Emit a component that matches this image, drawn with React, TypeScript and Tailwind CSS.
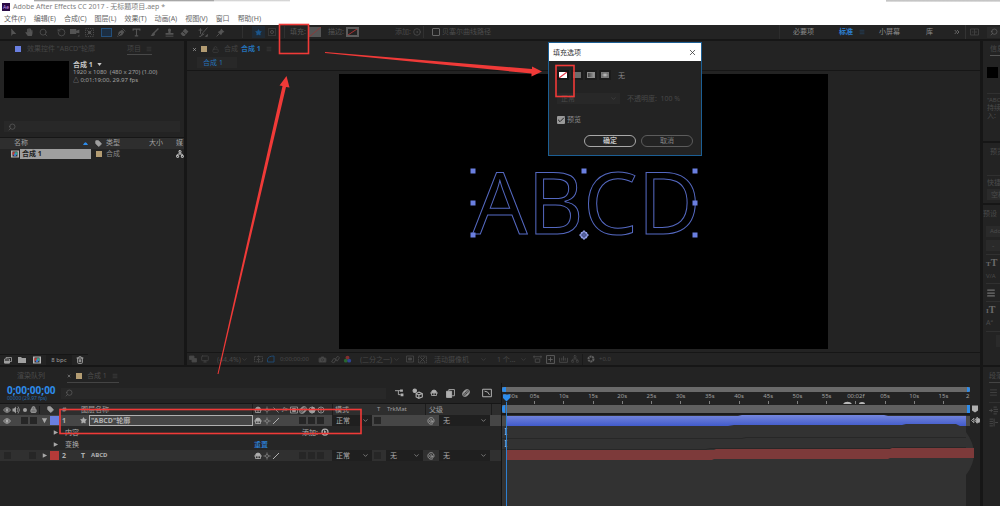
import React from "react";
import {
  Camera,
  Check,
  ChevronDown,
  ChevronsRight,
  CircleDot,
  Lock,
  LockOpen,
  Menu,
  Monitor,
  Network,
  RotateCcw,
  Search,
  Star,
  Tag,
  Trash2,
  X,
} from "lucide-react";
import { FaHandPaper } from "react-icons/fa";

const menus = [
  "文件(F)",
  "编辑(E)",
  "合成(C)",
  "图层(L)",
  "效果(T)",
  "动画(A)",
  "视图(V)",
  "窗口",
  "帮助(H)",
];

const ticks = [
  "05s",
  "10s",
  "15s",
  "20s",
  "25s",
  "30s",
  "35s",
  "40s",
  "45s",
  "50s",
  "55s",
  "00:02f",
  "05s",
  "10s",
  "15s",
];

const layerGrid =
  "grid grid-cols-[40px_20px_19px_174px_79px_42px_12px_39px_67px_10px] items-center";

interface GlyphProps {
  children: React.ReactNode;
  className?: string;
}

// 16 unit drawing box shared by all the hand made icons
const Glyph: React.FC<GlyphProps> = ({ children, className = "size-[9px]" }) => (
  <svg
    viewBox="0 0 16 16"
    className={`shrink-0 ${className}`}
    fill="none"
    stroke="currentColor"
    strokeWidth="1.6"
    aria-hidden="true"
  >
    {children}
  </svg>
);

interface ToolProps {
  label: string;
  children: React.ReactNode;
  className?: string;
}

const Tool: React.FC<ToolProps> = ({ label, children, className = "w-[15px]" }) => (
  <button
    type="button"
    aria-label={label}
    className={`h-3 shrink-0 flex items-center justify-center ${className}`}
  >
    {children}
  </button>
);

interface DropProps {
  label: string;
  value: string;
  className: string;
}

const Drop: React.FC<DropProps> = ({ label, value, className }) => (
  <span className={`relative shrink-0 h-[11px] flex items-center ${className}`}>
    <select
      aria-label={label}
      className="appearance-none w-full h-full pl-1 text-[7px] leading-[11px] outline-none"
    >
      <option>{value}</option>
    </select>
    <ChevronDown className="absolute right-[3px] size-[7px] pointer-events-none" />
  </span>
);

const Shy = () => (
  <Glyph className="size-[8px]">
    <path d="M3 7a5 5 0 0 1 10 0Z" fill="currentColor" />
    <path d="M0 8h16M8 8v6M3 8v5M13 8v5M3 13h10" />
  </Glyph>
);

const Sun = () => (
  <Glyph className="size-[8px] opacity-70">
    <circle cx="8" cy="8" r="3" />
    <path d="M8 1v3M8 12v3M1 8h3M12 8h3" />
  </Glyph>
);

const Slash = () => (
  <Glyph className="size-[8px]">
    <path d="M2 14 14 2" strokeWidth="2" />
  </Glyph>
);

const Blur = () => (
  <Glyph className="size-[8px]">
    <circle cx="10" cy="6" r="5" />
    <circle cx="8" cy="8" r="5" />
    <circle cx="6" cy="10" r="5" />
  </Glyph>
);

const Whip = () => (
  <Glyph className="size-[8px]">
    <path d="M10.500 8a2.500 2.500 0 1 1-1-2c1.500 1 0 5 2.500 5s3-7-1-9-10 1-9 7 8 6 10 4" />
  </Glyph>
);

const Eye = () => (
  <Glyph className="size-[8px]">
    <path d="M1 8q7-9 14 0-7 9-14 0Z" strokeWidth="2" />
    <circle cx="8" cy="8" r="2.500" fill="currentColor" />
  </Glyph>
);

const CompIcon = () => (
  <Glyph className="w-[10px] h-[8px]">
    <rect x="0" y="1" width="16" height="14" fill="#b5b5b5" stroke="none" />
    <rect x="3" y="3" width="10" height="10" fill="#333" stroke="none" />
    <circle cx="6" cy="7" r="3" fill="#c33" stroke="none" />
    <circle cx="10" cy="7" r="3" fill="#3a9" stroke="none" />
    <circle cx="8" cy="10" r="2.500" fill="#47c" stroke="none" />
  </Glyph>
);

const Triangle: React.FC<{ open?: boolean; label: string }> = ({ open, label }) => (
  <button type="button" aria-label={label} className="size-[8px] shrink-0 text-[#a8a8a8]">
    <Glyph className="size-[7px]">
      <path
        d={open ? "M2 3h12L8 14Z" : "M4 3v10l10-5Z"}
        fill="currentColor"
        stroke="none"
      />
    </Glyph>
  </button>
);

const Box = () => <span className="size-[7px] shrink-0 bg-[#262626]" />;

const Header = () => (
  <header className="relative bg-white text-[#666]">
    <div className="absolute top-0 left-[34px] w-[180px] h-[2px] bg-linear-to-b from-[#8b8b8b] to-white" />
    <div className="absolute top-0 left-[214px] w-[76px] h-[2px] bg-linear-to-b from-[#c8c8c8] to-white" />
    <div className="absolute top-0 right-0 w-[114px] h-[2px] bg-linear-to-b from-[#bbb] to-[#e4e4e4]" />
    <div className="flex items-center gap-[3px] h-[13px] px-[2px]">
      <span className="w-[8px] h-[8px] bg-[#2a0a45] text-[#c79bf0] text-[5px] leading-[8px] text-center">
        Ae
      </span>
      <h1 className="text-[7px] leading-[12px] text-[#808080]">
        Adobe After Effects CC 2017 - 无标题项目.aep *
      </h1>
    </div>
    <nav>
      <ul className="flex gap-2 h-[12px] px-1 text-[7px] leading-[11px]">
        {menus.map((item) => (
          <li key={item}>
            <button type="button" className="block">
              {item}
            </button>
          </li>
        ))}
      </ul>
    </nav>
  </header>
);

const Toolbar = () => (
  <div className="flex items-center h-4 border-b-2 border-[#161616] text-[#545454] text-[7px] whitespace-nowrap overflow-hidden">
    <div className="flex gap-[3px] pl-[6px]">
      <div className="flex">
        <Tool label="选取">
          <Glyph>
            <path d="M4 1v13l3-3.500h6Z" fill="currentColor" stroke="none" />
          </Glyph>
        </Tool>
        <Tool label="手形">
          <FaHandPaper className="size-[8px]" />
        </Tool>
        <Tool label="缩放">
          <Search className="size-[9px]" />
        </Tool>
      </div>
      <div className="flex">
        <Tool label="旋转" className="w-[14px]">
          <RotateCcw className="size-[9px]" />
        </Tool>
        <Tool label="摄像机" className="w-[14px]">
          <Glyph className="size-[10px]">
            <path d="M0 3h10v3l5-2v6l-5-1v2H0Z" fill="currentColor" stroke="none" />
            <path d="M12 15l3-3v3Z" fill="currentColor" stroke="none" />
          </Glyph>
        </Tool>
        <Tool label="锚点" className="w-[14px]">
          <Glyph>
            <rect x="1" y="1" width="14" height="14" strokeDasharray="2 2" />
            <path d="M4 4l8 8M12 4l-8 8" />
            <circle cx="8" cy="8" r="2" fill="currentColor" />
          </Glyph>
        </Tool>
      </div>
      <div className="flex">
        <Tool label="矩形">
          <span className="w-[11px] h-[9px] bg-[#1c2e42] border border-[#24507c]" />
        </Tool>
        <Tool label="钢笔">
          <Glyph>
            <path d="M1 15 3 7l6-4 4 4-4 6Z" fill="currentColor" stroke="none" />
            <path d="m10 1 5 5M1 15l6-6" />
            <path d="M2 14l5-5" stroke="#232323" />
          </Glyph>
        </Tool>
        <Tool label="文字">
          <Glyph>
            <path d="M2 5V2h12v3M8 2v12M5 14h6" strokeWidth="2" />
          </Glyph>
        </Tool>
      </div>
      <div className="flex">
        <Tool label="画笔">
          <Glyph>
            <path d="M15 1 7 9" strokeWidth="2.500" />
            <path d="M7 8c-4 0-3 5-6 6 4 1 8 0 8-4Z" fill="currentColor" stroke="none" />
          </Glyph>
        </Tool>
        <Tool label="仿制图章">
          <Glyph>
            <path d="M8 1a3 3 0 0 1 2 5v3h5v3H1V9h5V6a3 3 0 0 1 2-5Z" fill="currentColor" stroke="none" />
            <path d="M1 14.500h14" />
          </Glyph>
        </Tool>
        <Tool label="橡皮擦">
          <Glyph>
            <path d="m9 1 6 5-7 8H5l-4-4Z" fill="currentColor" stroke="none" />
            <path d="m4 6 6 5" stroke="#232323" />
          </Glyph>
        </Tool>
      </div>
      <Tool label="Roto 笔刷">
        <Glyph className="size-[10px]">
          <path d="M15 1 8 9l-3 5 5-3M4 2v9M1 5h6M2 15h3M12 15l3-3v3Z" />
        </Glyph>
      </Tool>
      <Tool label="操控点">
        <Glyph>
          <path d="m9 1 6 6-3 1-2 3-1 2-6-6 2-1 3-2Z" fill="currentColor" stroke="none" />
          <path d="m6 10-5 5" />
        </Glyph>
      </Tool>
    </div>
    <span className="ml-[14px] w-px h-3 bg-[#303030]" />
    <Tool label="形状" className="ml-[9px] w-[13px] bg-[#202a34]">
      <Star className="size-[7px] fill-[#1c568c] text-[#1c568c]" />
    </Tool>
    <Tool label="蒙版" className="w-[13px]">
      <Glyph className="size-[8px]">
        <rect x="1" y="1" width="14" height="14" strokeDasharray="2 2" />
        <circle cx="8" cy="8" r="3" />
      </Glyph>
    </Tool>
    <span className="ml-[6px] w-px h-3 bg-[#303030]" />
    <span className="ml-[5px] w-[19px]">填充:</span>
    <button type="button" aria-label="填充颜色" className="w-[12px] h-[10px] bg-[#555]">
      <svg viewBox="0 0 12 10" className="size-full stroke-[#8a3a3a]">
        <path d="M0 10 12 0" />
      </svg>
    </button>
    <span className="ml-[7px] w-[18px]">描边:</span>
    <button
      type="button"
      aria-label="描边颜色"
      className="w-[13px] h-[10px] border-2 border-[#5c5c5c]"
    >
      <svg viewBox="0 0 9 6" className="size-full stroke-[#a33]">
        <path d="M0 6 9 0" />
      </svg>
    </button>
    <span className="ml-[36px] w-[18px] text-[#484848]">添加:</span>
    <CircleDot className="size-[8px]" />
    <span className="ml-[2px] w-px h-3 bg-[#303030]" />
    <label className="ml-2 flex items-center gap-[2px] text-[#4c4c4c]">
      <input
        type="checkbox"
        className="appearance-none size-[8px] border border-[#666] rounded-[1px]"
      />
      贝塞尔曲线路径
    </label>
    <div className="ml-auto flex items-center h-full text-[#8c8c8c]">
      <span className="w-px h-full bg-[#2c2c2c]" />
      <button type="button" className="ml-[13px]">必要项</button>
      <button type="button" className="ml-[25px] font-bold text-[#2d7fd0]">标准</button>
      <Menu className="ml-[6px] size-[6px] text-[#24507c]" />
      <button type="button" className="ml-[14px]">小屏幕</button>
      <button type="button" className="ml-[26px]">库</button>
      <ChevronsRight className="ml-[20px] size-[8px]" />
      <span className="ml-[4px] w-px h-full bg-[#333]" />
      <Glyph className="ml-[3px] w-[11px] h-[8px] text-[#444]">
        <path d="M0 2h16v12H0ZM8 2v12M3 8h3M11 6v4" />
      </Glyph>
      <span className="ml-[7px] w-[13px] h-[11px] pl-[3px] flex items-center bg-[#2a2a2a]">
        <Search className="size-[8px] -scale-x-100 text-[#666]" />
      </span>
    </div>
  </div>
);

const ProjectPanel = () => (
  <section className="w-[184px] shrink-0 flex flex-col bg-[#232323] text-[7px] leading-[10px] text-[#a0a0a0] whitespace-nowrap">
    <div className="flex h-4 pl-[15px] text-[#454545]">
      <span className="mt-[5px] size-[6px] bg-[#6a7fe0]" />
      <span className="ml-[6px] mt-[3px] w-[100px]">效果控件 "ABCD"轮廓</span>
      <span className="h-[14px] pt-[3px] w-[25px] flex justify-between border-b border-[#484848]">
        项目
        <Menu className="mt-[2px] size-[6px]" />
      </span>
    </div>
    <div className="flex gap-1 h-[64px] pt-1 pl-1">
      <div className="w-[65px] h-[37px] bg-black" />
      <div className="text-[6px] leading-[8px]">
        <h2 className="flex items-center text-[7px] leading-[7px] font-bold text-[#c8c8c8]">
          合成 1
          <Glyph className="ml-1 size-[5px]">
            <path d="M1 3h14L8 13Z" fill="currentColor" stroke="none" />
          </Glyph>
        </h2>
        <p>1920 x 1080&nbsp; (480 x 270) (1.00)</p>
        <p>△ 0;01;19;00, 29.97 fps</p>
      </div>
    </div>
    <label className="flex items-center mx-1 h-[11px] pl-1 bg-[#282828]">
      <Search className="size-[8px] -scale-x-100 text-[#606060]" />
      <input aria-label="搜索项目" className="min-w-0 flex-1 outline-none" />
    </label>
    <table className="mt-[5px] w-full table-fixed border-t border-[#161616]">
      <thead>
        <tr className="h-[11px] bg-[#2e2e2e]">
          <th className="w-[91px] pl-[14px] font-normal text-left">
            <span className="flex items-center justify-between">
              名称
              <Glyph className="mr-[2px] w-[7px] h-[5px] text-[#2d8ceb]">
                <path d="M0 13q8-18 16 0Z" fill="currentColor" stroke="none" />
              </Glyph>
            </span>
          </th>
          <th className="w-[15px]" aria-label="标签">
            <Tag className="mx-auto size-[7px] fill-[#a0a0a0]" />
          </th>
          <th className="w-[39px] font-normal text-left">类型</th>
          <th className="w-[31px] pl-1 font-normal text-left">大小</th>
          <th className="font-normal text-left">媒</th>
        </tr>
      </thead>
      <tbody>
        <tr className="h-[11px]">
          <td className="pl-[10px]">
            <span className="flex items-center">
              <CompIcon />
              <span className="flex-1 h-[10px] pl-[2px] bg-[#9f9f9f] font-bold text-[#1c1c1c]">
                合成 1
              </span>
            </span>
          </td>
          <td>
            <span className="block mx-auto size-[6px] bg-[#b39c72]" />
          </td>
          <td className="text-[#888]">合成</td>
          <td />
          <td>
            <Network className="size-[8px] text-[#c0c0c0] stroke-3" />
          </td>
        </tr>
      </tbody>
    </table>
    <div className="mt-auto flex items-center h-[11px] mr-[96px] pl-[3px] border-t border-[#161616]">
      <Glyph className="w-[10px] h-[8px]">
        <path d="M1 6h10v8H1ZM4 6V3h11v8h-4" />
        <path d="M1 10h10v4H1Z" fill="currentColor" />
      </Glyph>
      <Glyph className="ml-[5px] size-[8px]">
        <path d="M0 2h6l2 2h8v10H0Z" fill="currentColor" stroke="none" />
      </Glyph>
      <span className="ml-[6px] flex">
        <CompIcon />
      </span>
      <span className="ml-[4px] w-[26px] text-center text-[6px] bg-[#1d1d1d]">8 bpc</span>
      <Trash2 className="ml-[4px] size-[8px] stroke-3" />
    </div>
  </section>
);

const Handle: React.FC<{ className: string }> = ({ className }) => (
  <span className={`absolute size-[5px] -translate-1/2 bg-[#6a7fe0] ${className}`} />
);

const Viewer = () => (
  <section className="min-w-0 flex-1 flex flex-col bg-[#232323] text-[7px] leading-[10px] whitespace-nowrap">
    <div className="flex items-center h-4 pl-[5px] text-[#444]">
      <X className="size-[5px] stroke-3 text-[#aaa]" />
      <span className="ml-[4px] size-[6px] bg-[#b39c72]" />
      <LockOpen className="ml-[5px] size-[7px]" />
      <span className="ml-[5px]">合成</span>
      <span className="ml-[3px] font-bold text-[#2572b8]">合成 1</span>
      <Menu className="ml-[5px] size-[6px]" />
    </div>
    <div className="h-[14px] pl-[10px] border-b border-[#161616]">
      <button type="button" className="block w-10 h-[11px] pr-2 bg-[#282828] text-[#2572b8]">
        合成 1
      </button>
    </div>
    <div className="px-38 pt-[3px] pb-[3px]">
      <div className="relative h-[275px] bg-black">
        {/* selected outline layer */}
        <div className="absolute left-1/2 top-[97px] w-[222px] h-[64px] -translate-x-1/2">
          <p className="text-[86px] leading-[60px] font-['Noto_Sans'] text-transparent [-webkit-text-stroke:1px_#5468c0]">
            ABCD
          </p>
          <Handle className="left-0 top-0" />
          <Handle className="left-1/2 top-0" />
          <Handle className="left-full top-0" />
          <Handle className="left-0 top-1/2" />
          <Handle className="left-full top-1/2" />
          <Handle className="left-0 top-full" />
          <Handle className="left-full top-full" />
          <svg
            viewBox="0 0 16 16"
            className="absolute left-1/2 top-full size-[10px] -translate-1/2"
          >
            <path d="m8 0 3 3h2v2l3 3-3 3v2h-2l-3 3-3-3H3v-2L0 8l3-3V3h2Z" fill="#8f9be0" />
            <path d="M8 3v10M3 8h10" stroke="#2a3468" />
            <circle cx="8" cy="8" r="3" fill="none" stroke="#2a3468" />
          </svg>
        </div>
      </div>
    </div>
    <div className="mt-auto flex items-center h-[13px] pl-[2px] border-t border-[#161616] text-[#484848]">
      <Tool label="始终预览" className="w-2">
        <Glyph className="size-[8px]">
          <path d="M1 2h9v7H1ZM6 7h9v7H6Z" fill="currentColor" />
        </Glyph>
      </Tool>
      <Tool label="主查看器" className="ml-[4px] w-2">
        <Monitor className="size-[8px]" />
      </Tool>
      <Drop label="放大率" value="(44.4%)" className="ml-[4px] w-[38px]" />
      <Tool label="网格" className="ml-[2px] w-[10px]">
        <Glyph>
          <path d="M1 3h14v9H1ZM8 1v13M5 8h6" strokeDasharray="3 1" />
        </Glyph>
      </Tool>
      <Tool label="蒙版可见性" className="ml-[2px] w-[11px] text-[#1e4870]">
        <Glyph className="size-[8px]">
          <path d="M1 14V9q1-7 13-7v12Z" strokeWidth="2" />
        </Glyph>
      </Tool>
      <span className="mx-[4px] w-[34px] text-[6px]">0;00;00;00</span>
      <Camera className="size-[9px] shrink-0 fill-[#484848] stroke-[#333]" />
      <Glyph className="ml-[4px] size-[9px]">
        <path d="m1 12 4-6 4 2-4 6ZM8 7l4-5 3 3-4 6Z" />
      </Glyph>
      <Glyph className="ml-[3px] size-[9px]">
        <circle cx="8" cy="5" r="3.500" fill="#822f2f" stroke="none" />
        <circle cx="5" cy="10" r="3.500" fill="#28662f" stroke="none" />
        <circle cx="11" cy="10" r="3.500" fill="#2f4292" stroke="none" />
      </Glyph>
      <Drop label="分辨率" value="(二分之一)" className="ml-[4px] w-[47px]" />
      <Glyph className="ml-[3px] size-[8px]">
        <path d="M1 2h14v12H1Z" />
        <path d="M5 6h6v4H5Z" fill="currentColor" />
      </Glyph>
      <Glyph className="ml-[4px] size-[9px]">
        <path d="M1 2h14v12H1Z" strokeDasharray="3 1" />
        <path d="M4 12 12 4M4 4l8 8" />
      </Glyph>
      <Drop label="视图" value="活动摄像机" className="ml-[3px] w-[60px]" />
      <Drop label="视图布局" value="1 个..." className="ml-[3px] w-[37px]" />
      <Glyph className="ml-[3px] size-[9px]">
        <path d="M0 3h16M4 7h8v6H4ZM2 1v5M14 1v5" />
      </Glyph>
      <Glyph className="ml-[4px] size-[9px] text-[#606060]">
        <path d="M1 1h14v14H1ZM8 4v8M4 8h8" />
      </Glyph>
      <Glyph className="ml-[4px] size-[9px]">
        <path d="M1 5v8h14V5M5 5v5M8 2v8M11 5v5" />
      </Glyph>
      <Network className="ml-[3px] size-[8px] shrink-0" />
      <span className="mx-[3px] w-px h-[11px] bg-[#1a1a1a]" />
      <Glyph className="ml-[1px] size-[8px] text-[#606060]">
        <circle cx="8" cy="8" r="5" strokeWidth="4" strokeDasharray="4 1" />
      </Glyph>
      <span className="ml-[4px] text-[6px]">+0.0</span>
    </div>
  </section>
);

const LayerHead = () => (
  <div className={`${layerGrid} h-[11px] bg-[#2e2e2e] text-[7px] leading-[11px] text-[#a0a0a0]`}>
    <span className="flex items-center gap-px pl-[3px] border-r border-[#1c1c1c]">
      <Eye />
      <Glyph className="size-[8px]">
        <path d="M1 5h3l4-4v14l-4-4H1Z" fill="currentColor" stroke="none" />
        <path d="M10 4q4 4 0 8M12 1q6 7 0 14" />
      </Glyph>
      <Glyph className="size-[8px]">
        <circle cx="8" cy="8" r="4" fill="currentColor" stroke="none" />
      </Glyph>
      <Lock className="size-[7px] stroke-3 fill-[#777]" />
    </span>
    <span className="flex justify-center">
      <Tag className="size-[7px] fill-[#a0a0a0]" />
    </span>
    <span className="pl-[2px]">#</span>
    <span className="pl-[2px] border-r border-[#1c1c1c]">图层名称</span>
    <span className="flex items-center gap-px pl-px">
      <Shy />
      <Sun />
      <Glyph className="size-[8px]">
        <path d="m3 3 10 10" />
      </Glyph>
      <i className="w-[8px] text-[6px] text-center">fx</i>
      <Glyph className="size-[8px]">
        <path d="M1 2h14v12H1Z" />
        <path d="M5 5h6v6H5Z" fill="currentColor" />
      </Glyph>
      <Blur />
      <Glyph className="size-[8px]">
        <circle cx="8" cy="8" r="6" />
        <path d="M8 2a6 6 0 0 1-6 6q2 6 6 6a6 6 0 0 0 0-12" fill="currentColor" />
      </Glyph>
      <Glyph className="size-[8px]">
        <circle cx="8" cy="8" r="6" />
        <path d="M8 4v8" />
      </Glyph>
    </span>
    <span className="pl-[2px] border-l border-[#1c1c1c]">模式</span>
    <span className="pl-[3px] text-[6px]">T</span>
    <span className="pl-px text-[6px]">TrkMat</span>
    <span className="pl-[3px] border-x border-[#1c1c1c]">父级</span>
    <span />
  </div>
);

const Switches = () => (
  <span className="flex items-center gap-px pl-px">
    <Shy />
    <Sun />
    <Slash />
    <span className="flex gap-[2px] ml-[18px]">
      <Box />
      <Box />
      <Box />
    </span>
  </span>
);

const LayerOutline = () => (
  <div className="w-[502px] shrink-0 border-r border-[#141414] text-[7px] leading-[11px] text-[#b0b0b0] whitespace-nowrap">
    <div className="flex items-center h-[21px] pl-[7px] border-b border-[#161616]">
      <div className="w-[54px]">
        <p className="text-[10px] leading-[10px] font-bold text-[#2d8ceb]">0;00;00;00</p>
        <p className="text-[5px] leading-[7px] text-[#2666a4]">00000 (29.97 fps)</p>
      </div>
      <label className="flex items-center w-[325px] h-[11px] pl-1 bg-[#282828]">
        <Search className="size-[8px] -scale-x-100 text-[#606060]" />
        <input aria-label="搜索图层" className="min-w-0 flex-1 outline-none" />
      </label>
      <div className="flex-1 flex items-center justify-between pl-[9px] pr-[9px]">
        <Glyph>
          <path d="M0 3h9M6 3v7h4" />
          <path d="M9 1h5v4H9ZM10 8h5v5h-5Z" fill="currentColor" stroke="none" />
        </Glyph>
        <Glyph className="size-[11px]">
          <path d="m10 6 5 2v5l-5 2-4-2V8ZM6 8l4 2 5-2M10 10v5" />
          <circle cx="4" cy="4" r="2.500" fill="currentColor" />
        </Glyph>
        <Shy />
        <Glyph>
          <path d="M1 4h9v11H1Z" fill="currentColor" />
          <path d="M5 4V1h10v11h-4" />
        </Glyph>
        <Blur />
        <Glyph className="ml-[4px] size-[10px]">
          <path d="M1 2h14v12H1ZM4 5q6 0 8 6" />
        </Glyph>
      </div>
    </div>
    <LayerHead />
    <div className={`${layerGrid} h-[11px] bg-[#464646]`}>
      <span className="flex items-center pl-[3px]">
        <Eye />
        <span className="flex gap-[2px] ml-[10px]">
          <Box />
          <Box />
        </span>
      </span>
      <span className="flex items-center gap-px pl-px">
        <Triangle open label="折叠图层 1" />
        <span className="w-[9px] h-[9px] bg-[#6a7fe0]" />
      </span>
      <span className="pl-[2px] font-bold">1</span>
      <span className="flex items-center">
        <Star className="ml-px mr-[2px] size-[7px] fill-[#b0b0b0]" />
        <input
          aria-label="图层名称"
          defaultValue={'"ABCD"轮廓'}
          className="min-w-0 flex-1 h-[11px] pl-px border border-[#b0b0b0] font-bold outline-none"
        />
      </span>
      <Switches />
      <Drop label="图层 1 模式" value="正常" className="w-[40px] bg-[#1f1f1f]" />
      <Box />
      <span />
      <span className="flex items-center gap-[4px] pl-[2px]">
        <Whip />
        <Drop label="图层 1 父级" value="无" className="w-[51px] bg-[#1f1f1f]" />
      </span>
      <span />
    </div>
    <div className="flex items-center h-3 pl-[52px] bg-[#262626]">
      <Triangle label="展开内容" />
      <span className="ml-[5px] w-[237px]">内容</span>
      <span>添加:</span>
      <Glyph className="ml-[3px] size-[8px]">
        <circle cx="8" cy="8" r="6" strokeWidth="2.500" />
        <path d="M6 4v8l5-4Z" fill="currentColor" stroke="none" />
      </Glyph>
    </div>
    <div className="flex items-center h-3 pl-[52px] bg-[#262626]">
      <Triangle label="展开变换" />
      <span className="ml-[5px] w-[189px]">变换</span>
      <button type="button" className="text-[#2d8ceb]">重置</button>
    </div>
    <div className={`${layerGrid} h-[11px] bg-[#303030]`}>
      <span className="flex items-center gap-[18px] pl-[4px]">
        <Box />
        <Box />
      </span>
      <span className="flex items-center gap-px pl-px">
        <Triangle label="展开图层 2" />
        <span className="w-[9px] h-[9px] bg-[#b53a38]" />
      </span>
      <span className="pl-[2px] font-bold">2</span>
      <span className="flex items-center gap-[6px] pl-[2px] font-bold">
        <span>T</span>
        <span className="text-[6px]">ABCD</span>
      </span>
      <Switches />
      <Drop label="图层 2 模式" value="正常" className="w-[40px] bg-[#1f1f1f]" />
      <Box />
      <Drop label="图层 2 轨道遮罩" value="无" className="w-[37px] bg-[#1f1f1f]" />
      <span className="flex items-center gap-[4px] pl-[2px]">
        <Whip />
        <Drop label="图层 2 父级" value="无" className="w-[51px] bg-[#1f1f1f]" />
      </span>
      <span />
    </div>
  </div>
);

const Tracks = () => (
  <div className="relative min-w-0 flex-1 flex flex-col">
    <div className="mt-[4px] mr-[10px] flex justify-between h-[5px] bg-[#6a6a6a]">
      <span className="w-[4px] rounded-l-full bg-[#2d8ceb]" />
      <span className="w-[3px] rounded-r-full bg-[#2d8ceb]" />
    </div>
    <div className="flex h-[12px] text-[6px] leading-[9px] text-[#a0a0a0] whitespace-nowrap">
      <span className="w-[18px] pl-px">0:00s</span>
      {ticks.map((tick, index) => (
        <span key={index} className="min-w-0 flex-1 flex flex-col items-center">
          {tick}
          <span className="w-px h-[3px] bg-[#808080]" />
        </span>
      ))}
      <span className="w-[22px] pl-[8px]">2</span>
    </div>
    <div className="flex items-center h-[9px]">
      <div className="flex-1 flex justify-between h-[8px] bg-[#606060]">
        <span className="w-[3px] rounded-l-full bg-[#2d8ceb]" />
        <span className="w-[3px] bg-[#2d8ceb]" />
      </div>
      <Glyph className="mx-px size-[8px] text-[#b0b0b0]">
        <path d="M2 1h12v10l-6 4-6-4Z" fill="currentColor" stroke="none" />
      </Glyph>
    </div>
    <svg
      viewBox="0 0 478 93"
      preserveAspectRatio="none"
      className="w-full min-h-[93px] flex-1"
      role="img"
      aria-label="图层持续时间"
    >
      <defs>
        <linearGradient id="bar" x2="0" y2="1">
          <stop offset="0" stopColor="#7486dc" />
          <stop offset="1" stopColor="#425bcb" />
        </linearGradient>
      </defs>
      <path d="M0 2h464v17q16 22 0 43v31H0Z" fill="#323232" />
      <path d="M0 0h468v2H0Z" fill="#1a1a1a" />
      <path d="M0 3h4v10H0ZM464 3h4v10h-4Z" fill="#4a4a4a" />
      <path d="M4 3h232l4-1h142l4 1h78v10h-6l-4-2h-50l-4 1H232l-6 1H4Z" fill="url(#bar)" />
      <path d="M0 25.500h240l4-1h220M0 36.500h204l4-1h180l4-1h72" fill="none" stroke="#272727" />
      <path d="M4 37h208l2-1h174l2-1h82v10h-84l-2 1H212l-2 1H4Z" fill="#7d3a3a" />
    </svg>
    <svg
      viewBox="0 0 24 5"
      className="absolute left-[339px] top-[16px] w-[24px] h-[5px]"
      fill="#b8b8b8"
      aria-hidden="true"
    >
      <path d="M2 5a5 4 0 0 1 9 0ZM18 5a3 2 0 0 1 6 0Z" />
    </svg>
    <Glyph className="absolute right-0 top-[33px] size-[9px] text-[#b0b0b0]">
      <path d="m1 8 4-4v8ZM15 8l-4-6-4 6 4 5Z" />
      <path d="M10 5h5v6h-5Z" fill="currentColor" />
    </Glyph>
    {/* keyframe cursors and playhead */}
    <div className="absolute left-0 top-[44px] w-2 flex flex-col items-center gap-[2px] font-['Liberation_Serif'] text-[10px] leading-[10px] text-[#b8c8d8]">
      <span>I</span>
      <span>I</span>
    </div>
    <div className="absolute left-px top-[11px] bottom-0 w-[7px] flex flex-col items-center">
      <Glyph className="w-[7px] h-[8px] text-[#2d8ceb]">
        <path d="M0 0h16v8l-8 8-8-8Z" fill="currentColor" stroke="none" />
      </Glyph>
      <span className="w-px flex-1 bg-[#2d7fd0]" />
    </div>
  </div>
);

const Timeline = () => (
  <section className="flex-1 flex flex-col bg-[#232323]">
    <div className="flex h-4 pl-[17px] text-[7px] leading-[10px] text-[#4c4c4c]">
      <span className="w-[50px] pt-1">渲染队列</span>
      <span className="w-[52px] pt-[3px] flex items-center gap-[5px] border-b border-[#444]">
        <X className="size-[4px] stroke-3 text-[#aaa]" />
        <span className="size-[6px] bg-[#b39c72]" />
        <span>合成 1</span>
        <Menu className="size-[6px]" />
      </span>
    </div>
    <div className="flex-1 flex">
      <LayerOutline />
      <Tracks />
    </div>
  </section>
);

const SidePanels = () => (
  <aside className="w-[17px] shrink-0 flex flex-col gap-[2px] overflow-hidden text-[7px] leading-[8px] text-[#4a4a4a] whitespace-nowrap">
    <section className="h-[100px] pl-1 bg-[#232323]">
      <h2 className="pt-[4px] ml-[3px] h-[15px] border-b border-[#555]">信息</h2>
      <div className="mt-[11px] w-[11px] h-[11px] bg-black" />
      <div className="mt-[15px] pt-[2px] border-t border-[#303030]">
        <p className="text-[6px]">"ABC</p>
        <p>持续</p>
        <p>入:</p>
      </div>
    </section>
    <section className="h-[60px] pl-1 bg-[#232323]">
      <h2 className="pt-[5px] pl-[3px] h-[32px]">预览</h2>
      <p className="pt-[3px] h-[14px] border-t border-[#303030]">快捷</p>
      <p className="h-[11px] pl-1 leading-[11px] bg-[#2a2a2a]">空格</p>
    </section>
    <section className="h-[160px] pl-[3px] bg-[#232323]">
      <h2 className="pt-[5px] h-[21px] -ml-[3px]">预设</h2>
      <p className="h-[11px] pl-1 text-[6px] leading-[11px] bg-[#2a2a2a]">Ado</p>
      <p className="mt-[3px] h-[11px] pl-[6px] leading-[11px] bg-[#2a2a2a]">-</p>
      <div className="mt-[3px] h-[29px] pt-[3px] border-t border-[#303030]">
        <p className="flex items-baseline leading-[10px] font-['Liberation_Serif'] font-bold text-[#6a6a6a]">
          <span className="text-[7px]">T</span>
          <span className="text-[10px]">T</span>
        </p>
        <p className="pt-[3px] text-[6px]">V/A</p>
      </div>
      <div className="h-[18px] pt-1 border-t border-[#303030]">
        <Menu className="size-[10px] stroke-3 text-[#707070]" />
      </div>
      <div className="h-[31px] pt-[3px] border-y border-[#303030]">
        <p className="flex items-baseline leading-[10px] font-['Liberation_Serif'] font-bold text-[#6a6a6a]">
          <span className="text-[7px]">I</span>
          <span className="text-[10px]">T</span>
        </p>
        <p className="pt-[3px]">Aª</p>
      </div>
      <div className="mt-[3px] ml-[10px] h-[12px] bg-[#2a2a2a]" />
    </section>
    <section className="flex-1 pl-[6px] bg-[#232323]">
      <h2 className="pt-[5px] h-[16px] border-b border-[#444]">段落</h2>
      <Menu className="mt-[5px] size-[9px]" />
      <div className="mt-[5px] pt-[3px] flex flex-col gap-[3px] border-t border-[#303030]">
        <Glyph>
          <path d="M0 8h7M4 5v6M8 2h6M8 6h8M8 10h8M8 14h6" />
        </Glyph>
        <Glyph>
          <path d="M1 2h6M1 6h6M1 10h6M1 14h6M9 1v14M11 8h5" />
        </Glyph>
      </div>
    </section>
  </aside>
);

const FillDialog = () => (
  <div
    role="dialog"
    aria-label="填充选项"
    className="absolute left-[548px] top-[42px] w-[154px] border border-[#1c5f94] bg-[#232323] text-[7px] leading-[11px] text-[#8c8c8c]"
  >
    <div className="flex items-center justify-between h-[18px] pl-1 pr-[4px] bg-white text-[#333]">
      <h2>填充选项</h2>
      <button type="button" aria-label="关闭">
        <X className="size-[9px]" />
      </button>
    </div>
    <div className="px-2 pt-2 pb-2">
      <div className="flex items-center gap-[2px] h-3">
        <button type="button" aria-label="无" className="w-3 h-[10px] p-[2px] bg-[#151515]">
          <svg viewBox="0 0 8 6" className="size-full bg-white">
            <path d="M0 6 8 0" stroke="#e23b4a" strokeWidth="1.2" />
          </svg>
        </button>
        <button type="button" aria-label="纯色" className="w-3 h-[10px] p-[2px] bg-[#1b1b1b]">
          <span className="block size-full bg-[#6c6c6c]" />
        </button>
        <button type="button" aria-label="线性渐变" className="w-3 h-[10px] p-[2px] bg-[#1b1b1b]">
          <span className="block size-full border border-[#8a8a8a] bg-linear-to-r from-[#444] to-[#999]" />
        </button>
        <button type="button" aria-label="径向渐变" className="w-3 h-[10px] p-[2px] bg-[#1b1b1b]">
          <span className="block size-full border border-[#777] bg-radial from-[#ccc] to-[#555]" />
        </button>
        <span className="ml-[5px]">无</span>
      </div>
      <div className="mt-3 flex items-center gap-[7px] text-[#484848]">
        <Drop label="混合模式" value="正常" className="w-[63px] bg-[#282828]" />
        <span>不透明度: &nbsp;100 %</span>
      </div>
      <label className="relative mt-[10px] flex items-center gap-[2px] h-[11px]">
        <input
          type="checkbox"
          defaultChecked
          className="appearance-none size-[8px] rounded-[1px] bg-[#999]"
        />
        <Check className="absolute left-0 size-[8px] stroke-3 text-[#222] pointer-events-none" />
        预览
      </label>
      <div className="mt-[10px] flex justify-end gap-[5px]">
        <button
          type="button"
          className="w-[52px] h-3 rounded-full border border-[#a8a8a8] leading-[10px] font-bold text-[#c0c0c0]"
        >
          确定
        </button>
        <button
          type="button"
          className="w-[52px] h-3 rounded-full border border-[#5c5c5c] leading-[10px] text-[#808080]"
        >
          取消
        </button>
      </div>
    </div>
  </div>
);

// red call-outs drawn over the workspace
const Markup = () => (
  <svg
    viewBox="0 0 1000 506"
    className="absolute left-0 top-0 w-[1000px] h-[506px] pointer-events-none"
    fill="none"
    stroke="#f03a38"
    strokeWidth="1.6"
    aria-hidden="true"
  >
    <rect x="279.500" y="24.500" width="29" height="29" />
    <rect x="60" y="409.500" width="301" height="24" />
    <rect x="556" y="65.500" width="18" height="31" />
    <path
      d="M217.500 374 282.500 86l-3-.5L286.500 76l3 11.500-3.500-.5L218.500 374Z"
      fill="#f03a38"
      stroke="none"
    />
    <path
      d="M325 52 532 69V66.500l10 5L531.500 76.500V73.500L325 53Z"
      fill="#f03a38"
      stroke="none"
    />
  </svg>
);

export default function App() {
  return (
    <div className="relative min-h-screen flex flex-col overflow-hidden bg-[#232323] font-['Noto_Sans','Noto_Sans_CJK_SC',sans-serif]">
      <Header />
      <Toolbar />
      <main className="flex-1 flex gap-[3px] bg-[#161616]">
        <div className="min-w-0 flex-1 flex flex-col gap-[2px]">
          <div className="flex gap-[3px]">
            <ProjectPanel />
            <Viewer />
          </div>
          <Timeline />
        </div>
        <SidePanels />
      </main>
      <FillDialog />
      <Markup />
    </div>
  );
}
